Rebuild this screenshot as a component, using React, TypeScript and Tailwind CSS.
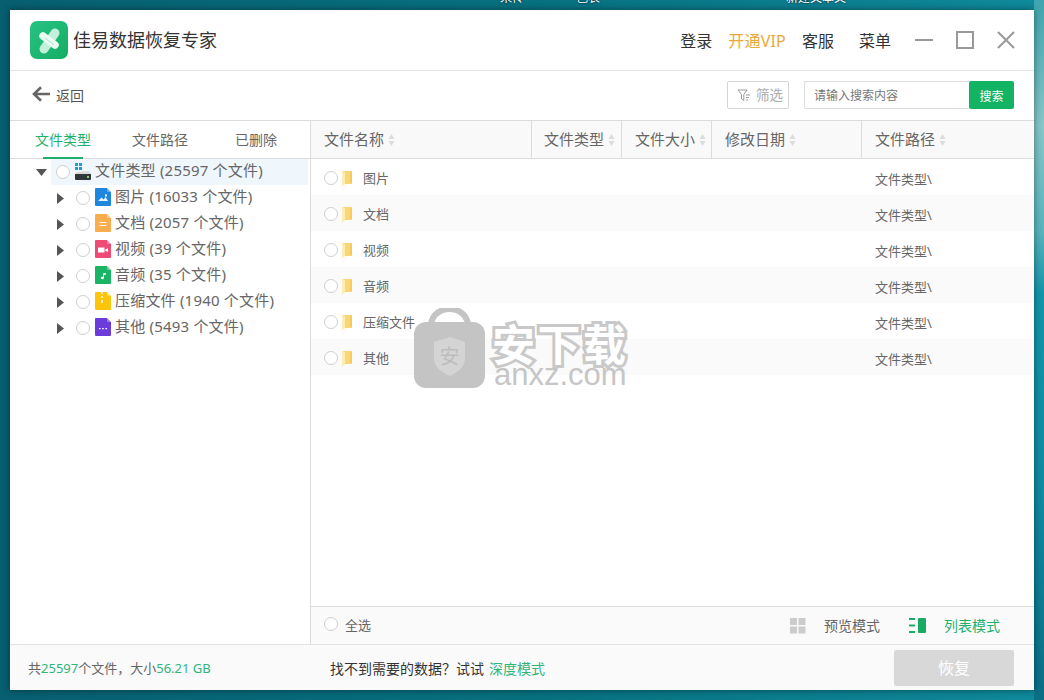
const treeRows = [
  { name: "图片 (16033 个文件)", color: "#1f86e0", kind: "image" },
  { name: "文档 (2057 个文件)", color: "#f8ae4f", kind: "doc" },
  { name: "视频 (39 个文件)", color: "#ee4a75", kind: "video" },
  { name: "音频 (35 个文件)", color: "#19b464", kind: "audio" },
  { name: "压缩文件 (1940 个文件)", color: "#fcc40a", kind: "zip" },
  { name: "其他 (5493 个文件)", color: "#6c3bdb", kind: "other" },
]

const fileRows = ["图片", "文档", "视频", "音频", "压缩文件", "其他"]

const columns = [
  { label: "文件名称", cls: "w-[220px] pl-[13px]" },
  { label: "文件类型", cls: "w-[90px] pl-[12px] border-l border-[#dcdcdc]" },
  { label: "文件大小", cls: "w-[90px] pl-[13px] border-l border-[#dcdcdc]" },
  { label: "修改日期", cls: "w-[150px] pl-[13px] border-l border-[#dcdcdc]" },
  { label: "文件路径", cls: "flex-1 pl-[13px] border-l border-[#dcdcdc]" },
]

function Radio() {
  return <span className="block w-[14px] h-[14px] shrink-0 rounded-full border border-[#cfcfcf] bg-white" />
}

function SortArrows() {
  return (
    <svg width="7" height="14" viewBox="0 0 7 14" className="ml-[4px] shrink-0">
      <path d="M3.5 1 L6.5 6 L0.5 6 Z" fill="#dcdcdc" />
      <path d="M3.5 13 L6.5 8 L0.5 8 Z" fill="#dcdcdc" />
    </svg>
  )
}

function FileIcon({ color, kind }: { color: string; kind: string }) {
  return (
    <svg width="16" height="18" viewBox="0 0 16 18" className="shrink-0">
      <path d="M1 0 H12 L16 4 V17 a1 1 0 0 1 -1 1 H1 a1 1 0 0 1 -1 -1 V1 a1 1 0 0 1 1 -1 Z" fill={color} />
      <path d="M12 0 L16 4 H13 a1 1 0 0 1 -1 -1 Z" fill="#ffffff" fillOpacity="0.35" />
      {kind === "image" && <path d="M3 13 L6.5 9.5 L8.5 11.5 L10.5 9 L13 13 Z M10 6.5 h2 v2 h-2 Z" fill="#ffffff" fillOpacity="0.9" />}
      {kind === "doc" && <path d="M4.5 8 h7 v1 h-7 Z M4.5 11 h7 v1 h-7 Z" fill="#ffffff" fillOpacity="0.9" />}
      {kind === "video" && <path d="M3 7.5 h6.5 v5 h-6.5 Z M10 10 L13 8 V12 L10 10.5 Z" fill="#ffffff" />}
      {kind === "audio" && <path d="M8 7.5 L11 7 V8.5 L9 9 V12 a1.6 1.3 0 1 1 -1 -1.2 Z" fill="#ffffff" />}
      {kind === "zip" && <path d="M6 0 h2 v2 h-2 Z M6 4 h2 v2 h-2 Z M6 8 h2 v3 h-2 Z" fill="#ffffff" fillOpacity="0.7" />}
      {kind === "other" && <path d="M4 10 h1.6 v1.2 h-1.6 Z M7.2 10 h1.6 v1.2 h-1.6 Z M10.4 10 h1.6 v1.2 h-1.6 Z" fill="#ffffff" />}
    </svg>
  )
}

function DriveIcon() {
  return (
    <svg width="16" height="17" viewBox="0 0 16 17" className="shrink-0">
      <path d="M0 0 h3 v3 h-3 Z M4 0 h3 v3 h-3 Z M0 4 h3 v3 h-3 Z M4 4 h3 v3 h-3 Z" fill="#1c9fd8" />
      <path d="M2 9 L14 8 L16 11 H0 Z" fill="#d8d8d8" />
      <path d="M0 11 h16 v5 a1 1 0 0 1 -1 1 H1 a1 1 0 0 1 -1 -1 Z" fill="#30363a" />
      <path d="M12 13 h2 v2 h-2 Z" fill="#7fd06a" />
    </svg>
  )
}

function FolderIcon() {
  return (
    <svg width="10" height="15" viewBox="0 0 10 15" className="shrink-0">
      <path d="M0 0 H10 V13 H3 L0 15 Z" fill="#f9d778" />
      <path d="M0 0 L3 1 V13 L0 15 Z" fill="#fdecb4" />
      <path d="M8 1 H10 V12 H8 Z" fill="#f6cb5c" />
    </svg>
  )
}

function Logo() {
  return (
    <div className="w-[38px] h-[38px] rounded-[7px] bg-gradient-to-br from-[#27c384] to-[#14ad64] shrink-0">
      <svg width="38" height="38" viewBox="0 0 38 38">
        <path d="M25 12 L14 28" stroke="#c3f0da" strokeWidth="9" strokeLinecap="round" />
        <path d="M13 15 L25 24" stroke="#e9fbf2" strokeWidth="7.5" strokeLinecap="round" />
        <path d="M15 17 L24 24" stroke="#a7e5c8" strokeWidth="1" />
      </svg>
    </div>
  )
}

function Watermark() {
  return (
    <div className="absolute left-[414px] top-[308px] flex items-start pointer-events-none">
      <svg width="71" height="80" viewBox="0 0 71 80" className="shrink-0">
        <path d="M17 16 C20 -4 51 -4 54 16" fill="none" stroke="#c4c4c4" strokeWidth="6" />
        <rect x="0" y="14" width="71" height="66" rx="12" fill="#c4c4c4" />
        <path d="M20 34 L36 29 L51 34 V50 C51 60 42 65 36 68 C29 65 20 60 20 50 Z" fill="#d4d4d4" />
        <text x="35.5" y="56" textAnchor="middle" fontSize="20" fill="#bdbdbd" fontFamily="'Noto Sans CJK SC', sans-serif">安</text>
      </svg>
      <div className="ml-[7px] mt-[17px] flex flex-col items-center">
        <span className="block text-[43px] leading-[40px] font-bold tracking-[2.5px] text-white [-webkit-text-stroke:6px_#c9c9c9] [paint-order:stroke_fill] whitespace-nowrap">安下载</span>
        <span className="block text-[31px] leading-[20px] text-[#c6c6c6] font-['Liberation_Sans',sans-serif]">anxz.com</span>
      </div>
    </div>
  )
}

export default function App() {
  return (
    <div className="relative w-[1044px] h-[700px] overflow-hidden p-[10px] bg-gradient-to-r from-[#075f70] via-[#07707f] to-[#0f8a9c] font-['Noto_Sans','Noto_Sans_CJK_SC',sans-serif]">
      <div className="absolute right-0 top-0 bottom-0 w-[10px] bg-[linear-gradient(to_bottom,#3fa5ae_0%,#86c6c8_18%,#58b4bd_33%,#1296aa_42%,#0f8ba2_70%,#0b6f85_100%)]" />
      <div className="absolute top-[-9px] left-[500px] text-[12px] leading-[14px] text-white [text-shadow:0_0_2px_#000]">来传</div>
      <div className="absolute top-[-9px] left-[576px] text-[12px] leading-[14px] text-white [text-shadow:0_0_2px_#000]">色表</div>
      <div className="absolute top-[-9px] left-[786px] text-[12px] leading-[14px] text-white [text-shadow:0_0_2px_#000]">新建文本文</div>

      <div className="relative w-[1024px] h-[680px] bg-white flex flex-col shadow-[0_0_7px_rgba(0,0,0,0.45)]">
        {/* title bar */}
        <div className="h-[61px] shrink-0 border-b border-[#e4e4e4] flex items-center pl-[20px] pr-[19px]">
          <Logo />
          <span className="ml-[5px] text-[18px] text-[#333333]">佳易数据恢复专家</span>
          <div className="ml-auto flex items-center text-[16px] text-[#333333]">
            <span className="pt-[2px]">登录</span>
            <span className="pt-[2px] ml-[16px] tracking-[0.2px] text-[#e9a93a]">开通VIP</span>
            <span className="pt-[2px] ml-[16px]">客服</span>
            <span className="pt-[2px] ml-[25px]">菜单</span>
            <svg width="18" height="18" viewBox="0 0 18 18" className="ml-[24px]">
              <path d="M0 9 H18" stroke="#999999" strokeWidth="2" />
            </svg>
            <svg width="18" height="18" viewBox="0 0 18 18" className="ml-[23px]">
              <rect x="1" y="1" width="16" height="16" fill="none" stroke="#999999" strokeWidth="2" />
            </svg>
            <svg width="18" height="18" viewBox="0 0 18 18" className="ml-[23px]">
              <path d="M1 1 L17 17 M17 1 L1 17" stroke="#999999" strokeWidth="2" />
            </svg>
          </div>
        </div>

        {/* toolbar */}
        <div className="h-[50px] shrink-0 border-b border-[#dcdcdc] flex items-center pl-[22px] pr-[20px] pb-[1px]">
          <svg width="18" height="16" viewBox="0 0 18 16" className="shrink-0 -mt-[2px]">
            <path d="M18 8 H3 M9 1.2 L2 8 L9 14.8" fill="none" stroke="#666666" strokeWidth="2.6" />
          </svg>
          <span className="ml-[6px] text-[14px] text-[#555555]">返回</span>
          <div className="ml-auto w-[62px] h-[28px] border border-[#d4d4d4] rounded-[2px] flex items-center pl-[9px] gap-[5px] text-[13.5px] text-[#aaaaaa]">
            <svg width="14" height="13" viewBox="0 0 14 13" className="shrink-0">
              <path d="M1 1 H10 L6.8 5.5 V11.5 L4.5 10 V5.5 Z M9 6 h4 M9 8.5 h3 M9 11 h2" fill="none" stroke="#999999" strokeWidth="1" />
            </svg>
            <span>筛选</span>
          </div>
          <div className="ml-[15px] flex h-[28px]">
            <div className="w-[165px] border border-r-0 border-[#dcdcdc] rounded-l-[2px] pl-[9px] pt-[2px] flex items-center text-[12px] text-[#777777]">请输入搜索内容</div>
            <div className="w-[45px] bg-[#12b464] rounded-[2px] pt-[3px] flex items-center justify-center text-[12px] text-white">搜索</div>
          </div>
        </div>

        {/* body */}
        <div className="flex-1 flex min-h-0">
          {/* left tree */}
          <div className="w-[301px] shrink-0 border-r border-[#dcdcdc] flex flex-col">
            <div className="h-[38px] shrink-0 border-b border-[#dcdcdc] flex text-[14px] text-[#666666]">
              <div className="w-[106px] flex justify-center items-center relative text-[#1fb16c]">
                文件类型
                <span className="absolute left-[33px] bottom-[-1px] w-[40px] h-[2px] bg-[#1fb16c]" />
              </div>
              <div className="w-[88px] flex justify-center items-center">文件路径</div>
              <div className="w-[104px] flex justify-center items-center">已删除</div>
            </div>
            <div className="flex items-center h-[26px] ml-[41px] mr-[2px] bg-[#eff7fd] text-[15px] text-[#666666] relative">
              <svg width="11" height="7" viewBox="0 0 11 7" className="absolute left-[-15px] top-[10px]">
                <path d="M0 0 H11 L5.5 7 Z" fill="#555555" />
              </svg>
              <span className="ml-[5px]"><Radio /></span>
              <span className="ml-[5px] mb-[2px]"><DriveIcon /></span>
              <span className="ml-[4px] pb-[4px] tracking-[0.2px] whitespace-nowrap">文件类型 (25597 个文件)</span>
            </div>
            {treeRows.map((row) => (
              <div key={row.name} className="flex items-center h-[26px] pl-[47px] text-[15px] text-[#666666]">
                <svg width="7" height="11" viewBox="0 0 7 11" className="shrink-0">
                  <path d="M0 0 L7 5.5 L0 11 Z" fill="#555555" />
                </svg>
                <span className="ml-[12px]"><Radio /></span>
                <span className="ml-[5px] mb-[2px]"><FileIcon color={row.color} kind={row.kind} /></span>
                <span className="ml-[4px] pb-[4px] tracking-[0.2px] whitespace-nowrap">{row.name}</span>
              </div>
            ))}
          </div>

          {/* right table */}
          <div className="flex-1 flex flex-col min-w-0">
            <div className="h-[38px] shrink-0 bg-[#f9f9f9] border-b border-[#dcdcdc] flex text-[15px] text-[#666666]">
              {columns.map((col) => (
                <div key={col.label} className={`${col.cls} flex items-center`}>
                  {col.label}
                  <SortArrows />
                </div>
              ))}
            </div>
            <div className="flex-1">
              {fileRows.map((name, i) => (
                <div key={name} className={`h-[36px] pt-[2px] flex items-center text-[13px] text-[#666666] ${i % 2 === 1 ? "bg-[#fafafa]" : "bg-white"}`}>
                  <div className="w-[550px] shrink-0 pl-[13px] flex items-center">
                    <Radio />
                    <span className="ml-[4px]"><FolderIcon /></span>
                    <span className="ml-[11px] mt-[2px]">{name}</span>
                  </div>
                  <div className="w-[171px] pl-[14px] mt-[4px]">文件类型\</div>
                </div>
              ))}
            </div>
            <div className="h-[38px] shrink-0 bg-[#fafafa] border-t border-[#dcdcdc] flex items-center pl-[13px] pr-[34px] text-[13px] text-[#666666]">
              <span className="-mt-[3px]"><Radio /></span>
              <span className="ml-[7px]">全选</span>
              <svg width="16" height="16" viewBox="0 0 16 16" className="ml-auto">
                <path d="M0 0 h7 v7 h-7 Z M8.5 0 h7 v7 h-7 Z M0 8.5 h7 v7 h-7 Z M8.5 8.5 h7 v7 h-7 Z" fill="#cccccc" />
              </svg>
              <span className="ml-[18px] text-[14px]">预览模式</span>
              <svg width="17" height="15" viewBox="0 0 17 15" className="ml-[29px]">
                <path d="M0 0 h6 v2 h-6 Z M0 6.5 h6 v2 h-6 Z M0 13 h6 v2 h-6 Z" fill="#19ab63" />
                <rect x="9" y="0" width="8" height="15" rx="1" fill="#19ab63" />
              </svg>
              <span className="ml-[18px] text-[14px] text-[#1fb16c]">列表模式</span>
            </div>
          </div>
        </div>

        {/* footer */}
        <div className="h-[46px] shrink-0 bg-[#fafafa] border-t border-[#e4e4e4] flex items-center pl-[18px] pr-[20px]">
          <span className="w-[302px] shrink-0 pt-[2px] text-[13px] text-[#666666]">
            共<span className="text-[#2fb57a]">25597</span>个文件，大小<span className="text-[#2fb57a]">56.21 GB</span>
          </span>
          <span className="pt-[2px] text-[14px] text-[#333333]">找不到需要的数据？试试</span>
          <span className="pt-[2px] ml-[5px] text-[14px] text-[#2fb57a]">深度模式</span>
          <div className="ml-auto w-[120px] h-[36px] bg-[#d8d8d8] rounded-[2px] flex items-center justify-center text-[16px] text-white">恢复</div>
        </div>
      </div>
      <Watermark />
    </div>
  )
}
